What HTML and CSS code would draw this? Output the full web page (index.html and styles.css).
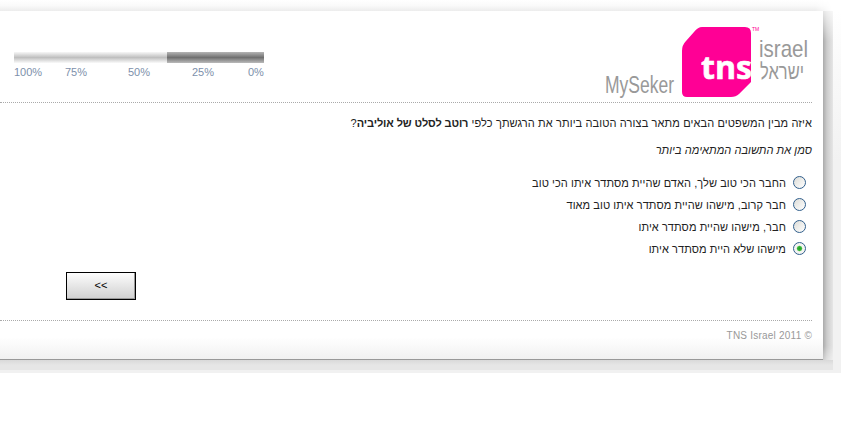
FILE: index.html
```html
<!DOCTYPE html>
<html lang="he" dir="rtl">
<head>
    <meta charset="UTF-8">
    <title>MySeker - TNS Israel</title>
    <link rel="stylesheet" href="styles.css">
</head>
<body>
    <div class="top-shade"></div>
    <div class="page">
        <div class="container">
            <div class="header">
                <svg class="logo" width="210" height="76" viewBox="0 0 210 76" direction="ltr">
                    <path d="M99 0H142Q148 0 148 6V55L136 67Q133 70 128 70H84Q79 70 79 65V24Q79 18 83 14L91 5Q95 0 99 0Z" fill="#ff0095"/>
                    <text x="2" y="66" class="logo-grey" font-size="23.5" textLength="69" lengthAdjust="spacingAndGlyphs">MySeker</text>
                    <text x="98" y="52" class="logo-tns" font-size="33" textLength="51" lengthAdjust="spacingAndGlyphs">tns</text>
                    <text x="149" y="4" class="logo-tm" font-size="5">TM</text>
                    <text x="156" y="30" class="logo-grey" font-size="24" textLength="49" lengthAdjust="spacingAndGlyphs">israel</text>
                    <text x="157" y="52" class="logo-grey" font-size="22" textLength="44" lengthAdjust="spacingAndGlyphs">ישראל</text>
                </svg>
                <div class="progress">
                    <div class="bar"><div class="bar-fill" style="width: 97px"></div></div>
                    <div class="scale">
                        <span>100%</span><span>75%</span><span>50%</span><span>25%</span><span>0%</span>
                    </div>
                </div>
            </div>

            <form class="survey">
                <p class="question">איזה מבין המשפטים הבאים מתאר בצורה הטובה ביותר את הרגשתך כלפי <b>רוטב לסלט של אוליביה</b>?</p>
                <p class="hint">סמן את התשובה המתאימה ביותר</p>
                <label class="option"><input type="radio" name="answer"><span>החבר הכי טוב שלך, האדם שהיית מסתדר איתו הכי טוב</span></label>
                <label class="option"><input type="radio" name="answer"><span>חבר קרוב, מישהו שהיית מסתדר איתו טוב מאוד</span></label>
                <label class="option"><input type="radio" name="answer"><span>חבר, מישהו שהיית מסתדר איתו</span></label>
                <label class="option"><input type="radio" name="answer" checked><span>מישהו שלא היית מסתדר איתו</span></label>
                <div class="buttons">
                    <button type="button" class="next" dir="ltr">&lt;&lt;</button>
                </div>
            </form>

            <div class="footer"><span dir="ltr">TNS Israel 2011 ©</span></div>
        </div>
        <div class="side-shade"></div>
        <div class="side-edge"></div>
    </div>
    <div class="bottom-shade"></div>
</body>
</html>
```
FILE: styles.css
```css
* {
    box-sizing: border-box;
}

body {
    margin: 0;
    background: #fff;
    color: #222;
    font-family: "Liberation Sans", Arial, sans-serif;
    font-size: 11px;
    overflow: hidden;
}

.top-shade {
    height: 11px;
    background: linear-gradient(#fff, #fafafa 50%, #ececec);
    -webkit-mask-image: linear-gradient(to right, #000 815px, transparent 832px);
    mask-image: linear-gradient(to right, #000 815px, transparent 832px);
}

.page {
    display: flex;
    direction: ltr;
    height: 349px;
}

.container {
    direction: rtl;
    width: 823px;
    height: 349px;
    padding-right: 11px;
    border-bottom: 1px solid #999;
    background: linear-gradient(#fff 326px, #f1f1f1);
}

.side-shade {
    width: 10px;
    background: linear-gradient(to right, #aaa, #ccc 40%, #e6e6e6);
    -webkit-mask-image: linear-gradient(rgba(0, 0, 0, 0.3), #000 30px, #000 335px, rgba(0, 0, 0, 0.6));
    mask-image: linear-gradient(rgba(0, 0, 0, 0.3), #000 30px, #000 335px, rgba(0, 0, 0, 0.6));
}

.side-edge {
    width: 8px;
    background: linear-gradient(#fff, #f9f9f9 60px, #f2f2f2 150px);
}

.bottom-shade {
    height: 13px;
    border-bottom: 3px solid #f1f1f1;
    border-right: 8px solid #f1f1f1;
    background: linear-gradient(#d9d9d9, #e6e6e6 5px);
}

/* header */
.header {
    display: flex;
    justify-content: space-between;
    height: 92px;
    border-bottom: 1px dotted #aaa;
}

.logo {
    margin-top: 16px;
    margin-right: -1px;
    overflow: visible;
}

.logo-grey {
    fill: #999;
    font-family: "Liberation Sans Narrow", "Liberation Sans", Arial, sans-serif;
}

.logo-tns {
    fill: #fff;
    stroke: #fff;
    stroke-width: 0.6px;
    font-family: "Open Sans", sans-serif;
    font-weight: bold;
}

.logo-tm {
    fill: #ff0095;
}

.progress {
    direction: ltr;
    width: 250px;
    margin-top: 41px;
    margin-left: 14px;
}

.bar {
    display: flex;
    justify-content: flex-end;
    height: 11px;
    background: linear-gradient(#f7f7f7, #bfbfbf 50%, #fafafa);
}

.bar-fill {
    height: 11px;
    background: linear-gradient(#b5b5b5, #707070 50%, #bababa);
}

.scale {
    display: grid;
    grid-template-columns: 51px 63px 64px 56px 16px;
    margin-top: 3px;
    color: #7d90ab;
    line-height: 13px;
}

/* question */
.survey {
    height: 217px;
    padding-top: 13px;
}

.question,
.hint {
    margin: 0;
    line-height: 14px;
    white-space: nowrap;
}

.question {
    letter-spacing: 0.12px;
}

.question b {
    letter-spacing: -0.12px;
}

.hint {
    margin-top: 13px;
    margin-bottom: 14px;
    font-style: italic;
    letter-spacing: 0.05px;
}

.option {
    display: flex;
    align-items: center;
    height: 22px;
    padding-right: 6px;
    letter-spacing: 0.07px;
    white-space: nowrap;
}

.option span {
    padding-top: 1px;
}

.option input {
    appearance: none;
    width: 13px;
    height: 13px;
    margin: 0 0 0 7px;
    border: 1px solid #315f8c;
    border-radius: 50%;
    background: linear-gradient(135deg, #dcdcd7, #fff);
}

.option input:checked {
    background: radial-gradient(circle, #21a121 0, #35b535 2px, #f4f4f2 3.2px);
}

.buttons {
    display: flex;
    justify-content: flex-end;
    padding: 13px 0 0 66px;
}

.next {
    width: 70px;
    height: 28px;
    padding: 0 0 2px;
    border: 1px solid #000;
    background: linear-gradient(#fdfdfd, #cfcfcf);
    box-shadow: inset -1px -1px #999;
    color: #000;
    font-family: "Liberation Sans", Arial, sans-serif;
    font-size: 11px;
}

/* footer */
.footer {
    padding-top: 8px;
    border-top: 1px dotted #aaa;
    color: #999;
    font-size: 10px;
    letter-spacing: 0.22px;
    line-height: 14px;
}
```
